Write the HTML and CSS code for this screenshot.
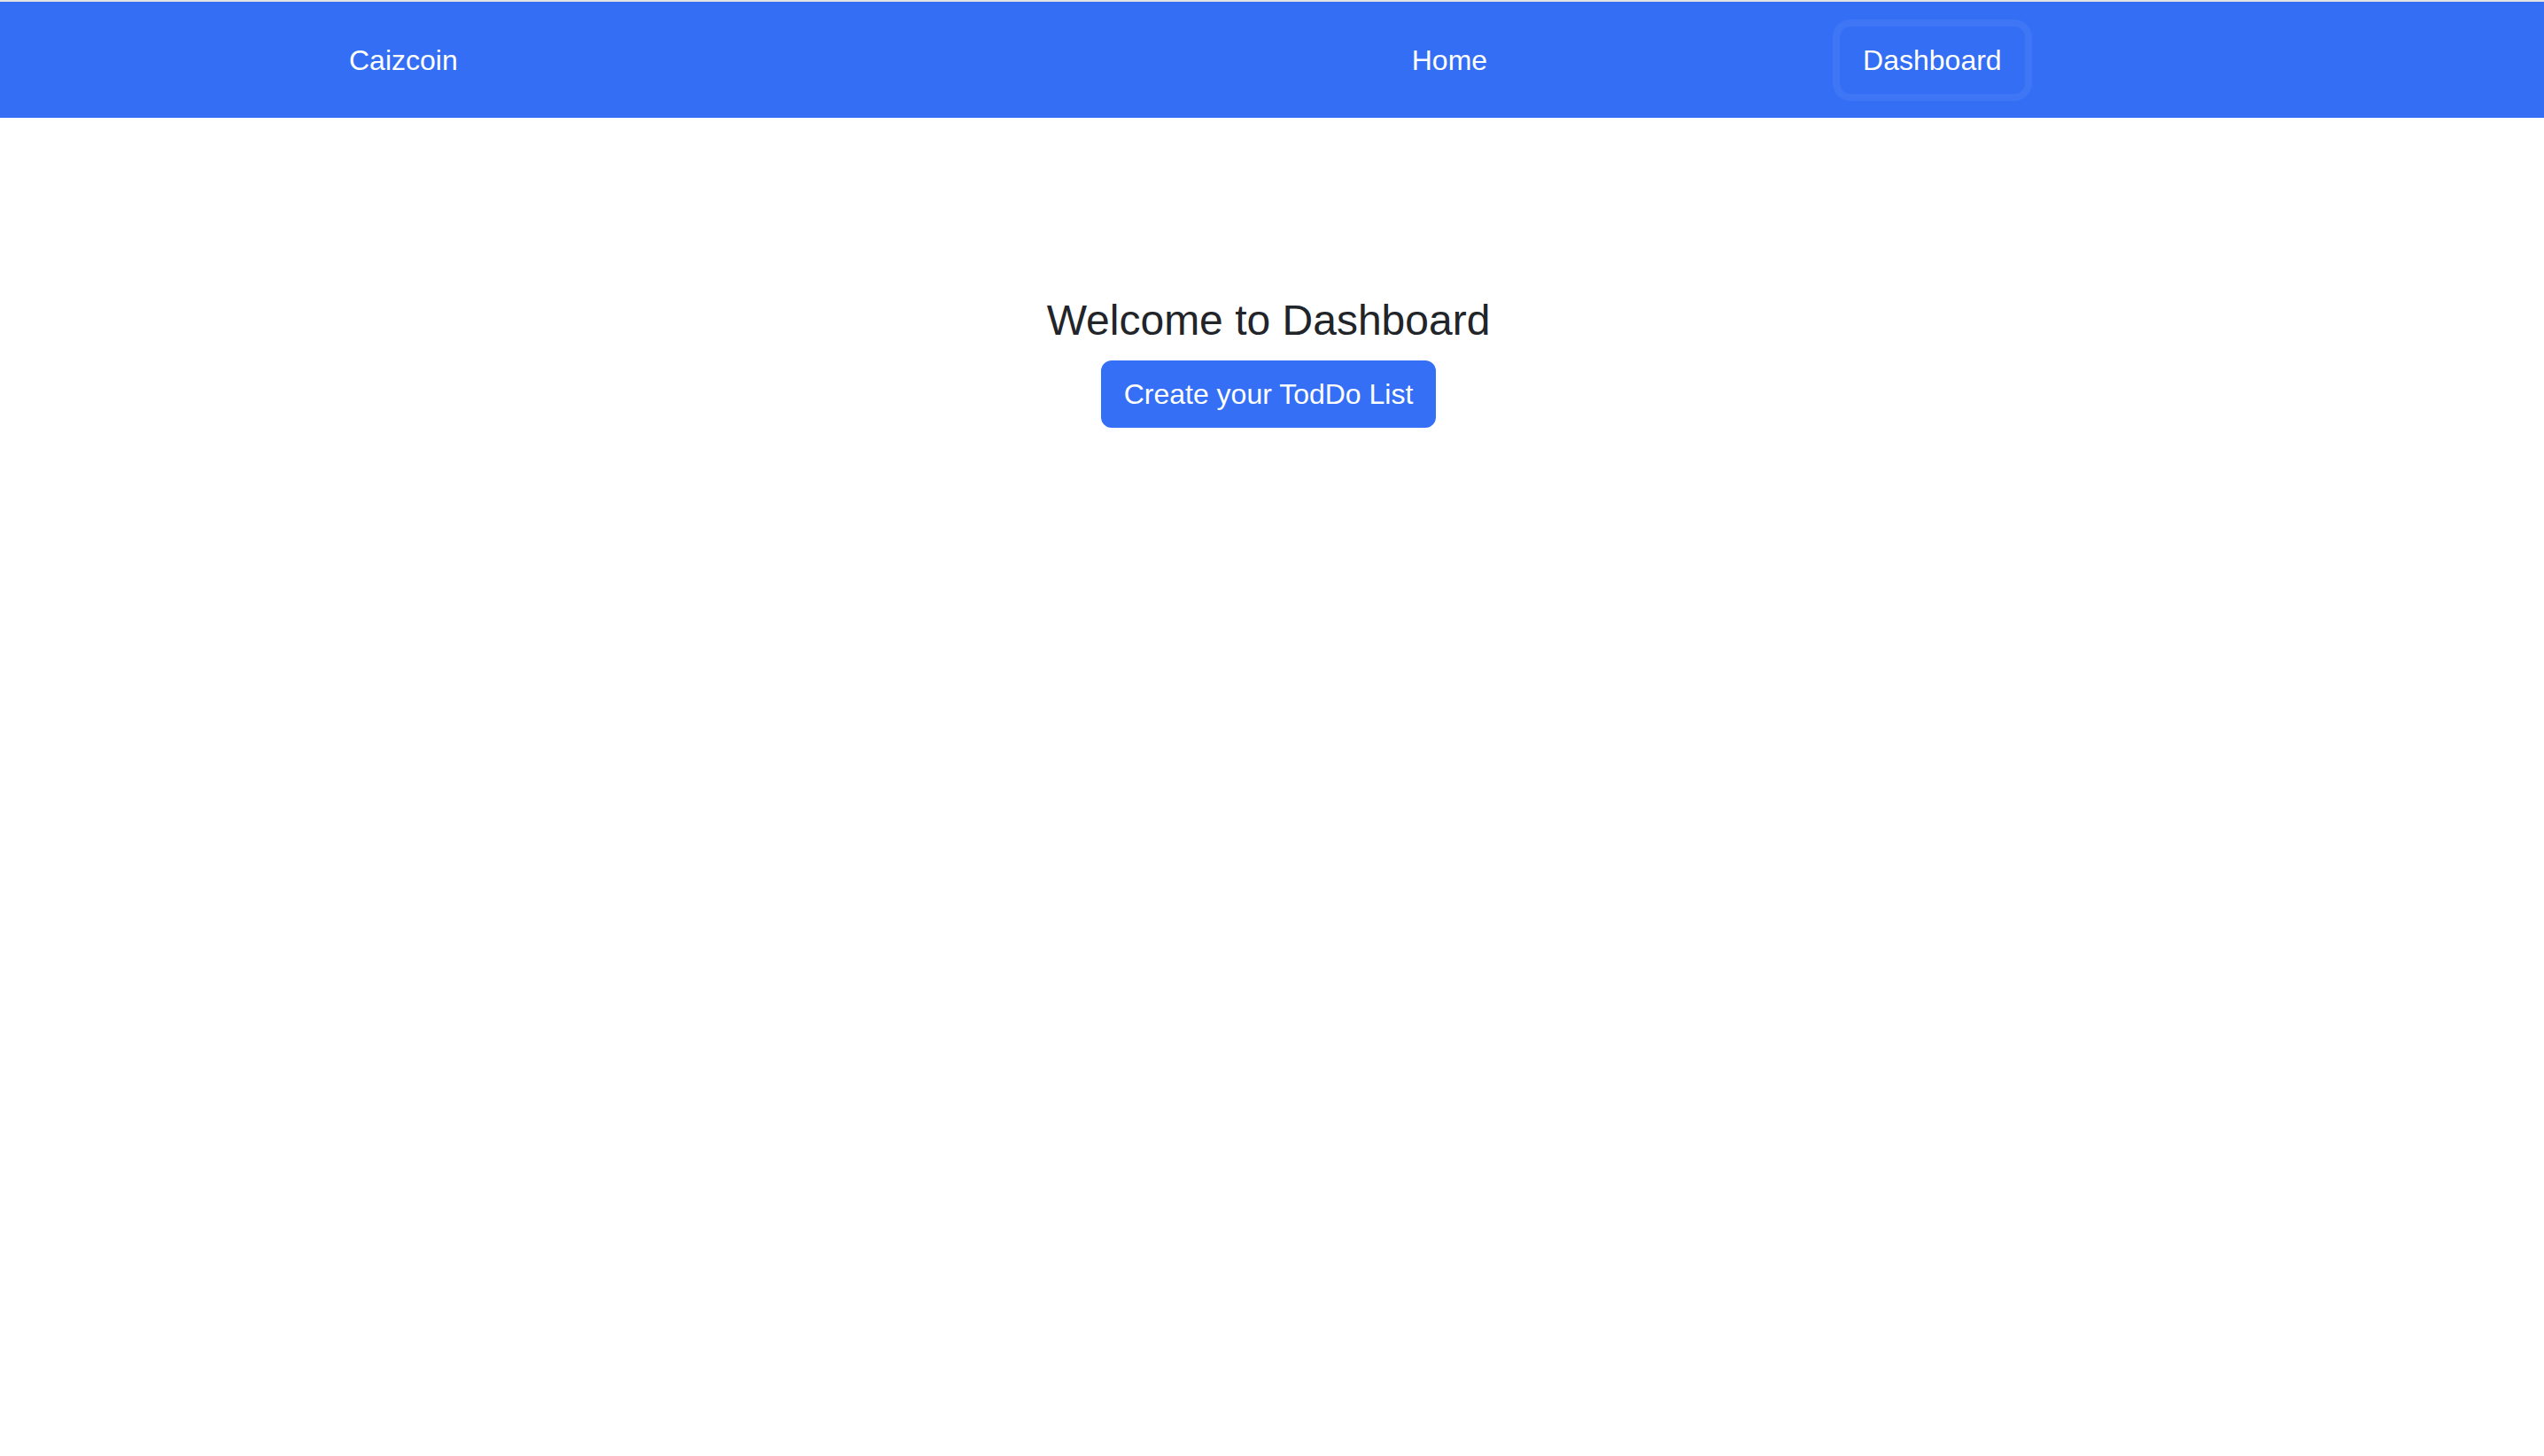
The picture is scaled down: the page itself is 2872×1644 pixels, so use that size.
FILE: index.html
```html
<!DOCTYPE html>
<html lang="en">
<head>
<meta charset="utf-8">
<title>Dashboard</title>
<link rel="stylesheet" href="styles.css">
</head>
<body>
<nav class="navbar">
  <a class="brand" href="#">Caizcoin</a>
  <div class="nav-links">
    <a class="nav-link" href="#">Home</a>
    <a class="nav-link active" href="#">Dashboard</a>
  </div>
</nav>
<main class="main">
  <h4 class="title">Welcome to Dashboard</h4>
  <button class="btn">Create your TodDo List</button>
</main>
</body>
</html>
```
FILE: styles.css
```css
html, body {
  margin: 0;
  padding: 0;
  background: #ffffff;
  font-family: "Liberation Sans", Arial, sans-serif;
  color: #212529;
}
body {
  border-top: 2px solid #e2e2e2;
}
.navbar {
  display: flex;
  align-items: center;
  height: 131px;
  background: #336ef5;
  padding-left: 394px;
  box-sizing: border-box;
}
.brand {
  color: #ffffff;
  text-decoration: none;
  font-size: 32px;
  line-height: 48px;
}
.nav-links {
  display: flex;
  align-items: center;
  gap: 372px;
  margin-left: 1051px;
}
.nav-link {
  color: #ffffff;
  text-decoration: none;
  font-size: 32px;
  line-height: 48px;
  padding: 14px 26px;
  border-radius: 12px;
}
.nav-link.active {
  box-shadow: 0 0 0 8px rgba(255, 255, 255, 0.06);
}
.main {
  display: flex;
  flex-direction: column;
  align-items: center;
  padding-top: 200px;
  padding-right: 8px;
}
.title {
  margin: 0 0 16px;
  font-size: 48px;
  font-weight: 400;
  line-height: 58px;
  color: #212529;
}
.btn {
  font-family: "Liberation Sans", Arial, sans-serif;
  font-size: 32px;
  line-height: 48px;
  color: #ffffff;
  background: #346ff5;
  border: 2px solid #346ff5;
  border-radius: 12px;
  padding: 12px 24px;
  cursor: pointer;
}
```
